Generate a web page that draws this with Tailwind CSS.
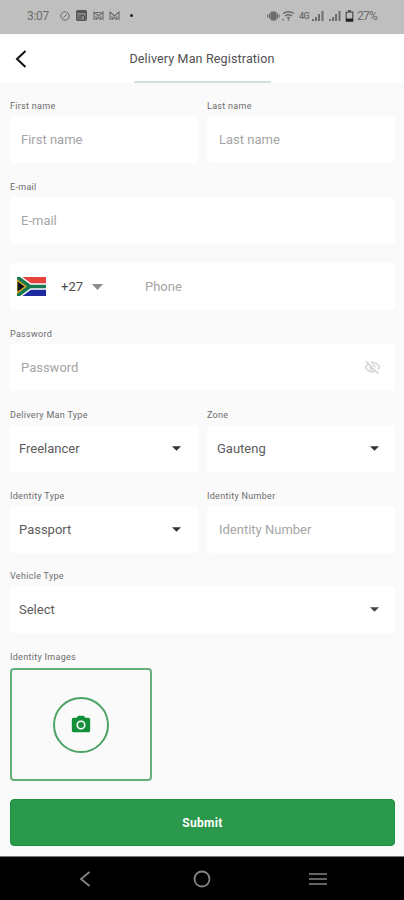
<!DOCTYPE html>
<html lang="en">
<head>
<meta charset="utf-8">
<meta name="viewport" content="width=device-width, initial-scale=1">
<title>Delivery Man Registration</title>
<script src="https://cdn.jsdelivr.net/npm/@tailwindcss/browser@4"></script>
</head>
<body class="w-[404px] h-[900px] overflow-hidden bg-[#fafafa] font-[Roboto,sans-serif] text-[13px] text-[#5c5c5c] flex flex-col">
<div class="h-[34px] shrink-0 bg-[#bfbfbf] flex items-center justify-between px-[27px] pb-[3px] text-[#6c6c6c]">
  <div class="flex items-center">
    <span class="text-[12px] leading-[14px] w-[33px] whitespace-nowrap -tracking-[0.3px]">3:07</span>
    <svg class="w-[10px] h-[10px]" viewBox="0 0 10 10" fill="none" stroke="currentColor"><circle cx="5" cy="5" r="4.2"/><path d="M3 7l4-4"/></svg>
    <svg class="w-[11px] h-[11px] ml-[6px]" viewBox="0 0 11 11"><rect x=".7" y=".7" width="9.600" height="9.600" rx="1" fill="#8c8c8c" stroke="#555" stroke-width="1.400"/><path d="M1 2h9" stroke="#555" stroke-width="2"/><path d="M3 4.500V9M5 9V4.500M5 6q1.500-2 3.500 0V9" stroke="#444" fill="none"/></svg>
    <svg class="w-[11px] h-[10px] ml-[6px]" viewBox="0 0 11 10" fill="none" stroke="currentColor" stroke-width="1.1"><path d="M1 9V1l4.500 4L10 1v8M3 9V5M8 9V5M3 1.500h5M3 8.500l2.500-2 2.500 2"/></svg>
    <svg class="w-[11px] h-[10px] ml-[5px]" viewBox="0 0 11 10" fill="none" stroke="currentColor" stroke-width="1.1"><path d="M1 9V1l4.500 4L10 1v8M3 9V5M8 9V5M3 8.500l2.500-2 2.500 2"/></svg>
    <span class="w-[3px] h-[3px] rounded-full bg-[#222] ml-[10px]"></span>
  </div>
  <div class="flex items-center">
    <svg class="w-[13px] h-[10px]" viewBox="0 0 13 10" stroke="#6c6c6c" stroke-width="1.200" fill="none"><path d="M.7 3.500v3M2.600 2.500v5M10.400 2.500v5M12.300 3.500v3"/><rect x="4" y="1" width="5" height="8" rx="1" fill="#6c6c6c"/></svg>
    <svg class="w-[13px] h-[10px] ml-[2px]" viewBox="0 0 13 10" fill="none" stroke="#6c6c6c" stroke-width="1.400"><path d="M1 2.500q5.500-3.500 11 0M3 5q3.500-2.500 7 0M5 7q1.500-1 3 0"/><path d="M6.500 7.500v2M1 8v1.500"/></svg>
    <span class="text-[9px] leading-[10px] ml-[4px] w-[13px] -tracking-[0.5px] font-medium">4G</span>
    <svg class="w-[12px] h-[10px]" viewBox="0 0 12 10" fill="#6c6c6c"><path d="M0 8h2v2H0zM3 6h2v4H3zM6 3h2v7H6zM9.500 0h2v10h-2z"/></svg>
    <svg class="w-[12px] h-[10px] ml-[5px]" viewBox="0 0 12 10" fill="#6c6c6c"><path d="M0 8h2v2H0zM3 6h2v4H3zM6 3h2v7H6zM9.500 0h2v10h-2z"/></svg>
    <svg class="w-[9px] h-[12px] ml-[4px]" viewBox="0 0 9 12"><path d="M1.200 2.200h6.600v9H1.200z" fill="none" stroke="#555" stroke-width="1.300"/><path d="M3 0h3v2H3z" fill="#555"/><path d="M1 8.500h7v3H1z" fill="#222"/></svg>
    <span class="text-[12px] leading-[14px] ml-[3px] w-[20px] whitespace-nowrap -tracking-[0.8px]">27%</span>
  </div>
</div>
<header class="h-[49px] shrink-0 bg-white grid grid-cols-[40px_1fr_40px] items-center relative">
  <svg class="w-[12px] h-[20px] ml-[15px]" viewBox="0 0 12 20" fill="none" stroke="#111" stroke-width="2"><path d="M10.500 2L2 10l8.500 8"/></svg>
  <h1 class="text-center text-[12.500px] leading-[16px] tracking-[0.15px] text-[#505050] whitespace-nowrap">Delivery Man Registration</h1>
  <div class="absolute bottom-0 left-[134px] w-[137px] h-[2px] bg-[#d2dfdc]"></div>
</header>
<main class="h-[773px] shrink-0 pt-[17px] pl-[10px] pr-[9px] flex flex-col">
  <div class="grid grid-cols-[188px_188px] gap-[9px]">
    <div><div class="h-[12px] leading-[12px] text-[9px] tracking-[0.3px] text-[#6c6c6c]">First name</div>
      <div class="mt-1 h-[47px] rounded bg-white flex items-center px-[11px] text-[#a5a5a5]">First name</div></div>
    <div><div class="h-[12px] leading-[12px] text-[9px] tracking-[0.3px] text-[#6c6c6c]">Last name</div>
      <div class="mt-1 h-[47px] rounded bg-white flex items-center px-[12px] text-[#a5a5a5]">Last name</div></div>
  </div>
  <div class="mt-[18px]"><div class="h-[12px] leading-[12px] text-[9px] tracking-[0.3px] text-[#6c6c6c]">E-mail</div>
    <div class="mt-1 h-[47px] rounded bg-white flex items-center px-[11px] text-[#a5a5a5]">E-mail</div></div>
  <div class="mt-[19px] h-[47px] rounded bg-white flex items-center pl-[7px]">
    <svg class="w-[29px] h-[19px]" viewBox="0 0 29 19"><path fill="#e5433c" d="M0 0h29v9.500H0z"/><path fill="#1c2ba0" d="M0 9.500h29V19H0z"/><path d="M0 0l13 9.500L0 19M13 9.500h16" fill="none" stroke="#fff" stroke-width="6.400"/><path d="M0 0l13 9.500L0 19z" fill="#d8a72d"/><path d="M0 0l13 9.500L0 19M12 9.500h17" fill="none" stroke="#187a50" stroke-width="3.600"/><path d="M0 3.200l8.500 6.300L0 15.800z" fill="#111" stroke="#d8a72d" stroke-width="1.200"/></svg>
    <span class="ml-[15px] w-[31px] text-[#4c4c4c]">+27</span>
    <svg class="w-[11px] h-[6px]" viewBox="0 0 11 6"><path d="M0 0h11L5.500 6z" fill="#8c8c8c"/></svg>
    <span class="ml-[42px] text-[#a5a5a5]">Phone</span>
  </div>
  <div class="mt-[18px]"><div class="h-[12px] leading-[12px] text-[9px] tracking-[0.3px] text-[#6c6c6c]">Password</div>
    <div class="mt-1 h-[47px] rounded bg-white flex items-center justify-between pl-[11px] pr-[14px] text-[#a5a5a5]">Password
      <svg class="w-[17px] h-[17px]" viewBox="0 0 24 24" fill="#d4d4d4"><path d="M12 6c3.790 0 7.170 2.130 8.820 5.500-.59 1.220-1.420 2.270-2.410 3.120l1.410 1.410c1.390-1.230 2.490-2.770 3.180-4.530C21.270 7.110 17 4 12 4c-1.270 0-2.490.2-3.640.57l1.650 1.650C10.660 6.090 11.320 6 12 6zm-1.070 1.140L13 9.210c.57.25 1.030.71 1.280 1.280l2.070 2.070c.08-.34.14-.7.14-1.070C16.500 9.010 14.480 7 12 7c-.37 0-.72.05-1.070.14zM2.010 3.870l2.680 2.680C3.060 7.830 1.770 9.530 1 11.500 2.730 15.890 7 19 12 19c1.520 0 2.980-.29 4.320-.82l3.420 3.420 1.410-1.410L3.420 2.450 2.010 3.870zm7.500 7.500l2.610 2.610c-.04.01-.08.02-.12.02-1.380 0-2.500-1.120-2.500-2.500 0-.05.01-.08.01-.13zm-3.400-3.400l1.750 1.750c-.23.550-.36 1.150-.36 1.780 0 2.480 2.020 4.500 4.500 4.500.63 0 1.230-.13 1.770-.36l.98.98c-.88.24-1.800.38-2.750.38-3.790 0-7.170-2.130-8.820-5.500.7-1.430 1.720-2.610 2.930-3.530z"/></svg></div></div>
  <div class="mt-[18px] grid grid-cols-[188px_188px] gap-x-[9px] gap-y-[18px]">
    <div><div class="h-[12px] leading-[12px] text-[9px] tracking-[0.3px] text-[#6c6c6c]">Delivery Man Type</div>
      <div class="mt-1 h-[47px] rounded bg-white flex items-center justify-between pl-[9px] pr-[17px]">Freelancer<svg class="w-[9px] h-[5px]" viewBox="0 0 10 5"><path d="M0 0h10L5 5z" fill="#333"/></svg></div></div>
    <div><div class="h-[12px] leading-[12px] text-[9px] tracking-[0.3px] text-[#6c6c6c]">Zone</div>
      <div class="mt-1 h-[47px] rounded bg-white flex items-center justify-between pl-[10px] pr-[16px]">Gauteng<svg class="w-[9px] h-[5px]" viewBox="0 0 10 5"><path d="M0 0h10L5 5z" fill="#333"/></svg></div></div>
    <div><div class="h-[12px] leading-[12px] text-[9px] tracking-[0.3px] text-[#6c6c6c]">Identity Type</div>
      <div class="mt-1 h-[47px] rounded bg-white flex items-center justify-between pl-[9px] pr-[17px]">Passport<svg class="w-[9px] h-[5px]" viewBox="0 0 10 5"><path d="M0 0h10L5 5z" fill="#333"/></svg></div></div>
    <div><div class="h-[12px] leading-[12px] text-[9px] tracking-[0.3px] text-[#6c6c6c]">Identity Number</div>
      <div class="mt-1 h-[47px] rounded bg-white flex items-center px-[12px] text-[#a5a5a5]">Identity Number</div></div>
  </div>
  <div class="mt-[17px]"><div class="h-[12px] leading-[12px] text-[9px] tracking-[0.3px] text-[#6c6c6c]">Vehicle Type</div>
    <div class="mt-1 h-[47px] rounded bg-white flex items-center justify-between pl-[9px] pr-[16px]">Select<svg class="w-[9px] h-[5px]" viewBox="0 0 10 5"><path d="M0 0h10L5 5z" fill="#444"/></svg></div></div>
  <div class="mt-[18px]"><div class="h-[12px] leading-[12px] text-[9px] tracking-[0.3px] text-[#6c6c6c]">Identity Images</div>
    <div class="mt-[5px] w-[142px] h-[113px] rounded-[4px] border-2 border-[#66ae7b] flex items-center justify-center">
      <div class="w-[56px] h-[56px] rounded-full border-2 border-[#4ca364] flex items-center justify-center">
        <svg class="w-[22px] h-[22px]" viewBox="0 0 24 24" fill="#128f38"><circle cx="12" cy="12" r="3.200"/><path d="M9 2L7.170 4H4c-1.100 0-2 .9-2 2v12c0 1.100.9 2 2 2h16c1.100 0 2-.9 2-2V6c0-1.100-.9-2-2-2h-3.170L15 2H9zm3 15c-2.760 0-5-2.240-5-5s2.240-5 5-5 5 2.240 5 5-2.240 5-5 5z"/></svg>
      </div>
    </div></div>
  <button class="mt-[18px] h-[47px] w-full shrink-0 rounded-[4px] bg-[#2a994b] border border-[#199340] text-white text-[12px] font-bold tracking-[0.3px]">Submit</button>
</main>
<nav class="h-[44px] shrink-0 bg-black border-t border-[#777] grid grid-cols-[1fr_62px_1fr] items-center text-[#858585]">
  <svg class="w-[12px] h-[16px] ml-[79px]" viewBox="0 0 12 16" fill="none" stroke="currentColor" stroke-width="1.800"><path d="M10.500 1L2 8l8.500 7"/></svg>
  <svg class="w-[18px] h-[18px] mx-auto" viewBox="0 0 18 18" fill="none" stroke="currentColor" stroke-width="1.800"><circle cx="9" cy="9" r="7.500"/></svg>
  <svg class="w-[18px] h-[14px] ml-[76px]" viewBox="0 0 18 14" stroke="currentColor" stroke-width="1.700"><path d="M0 2h18M0 7h18M0 12h18"/></svg>
</nav>
</body>
</html>
